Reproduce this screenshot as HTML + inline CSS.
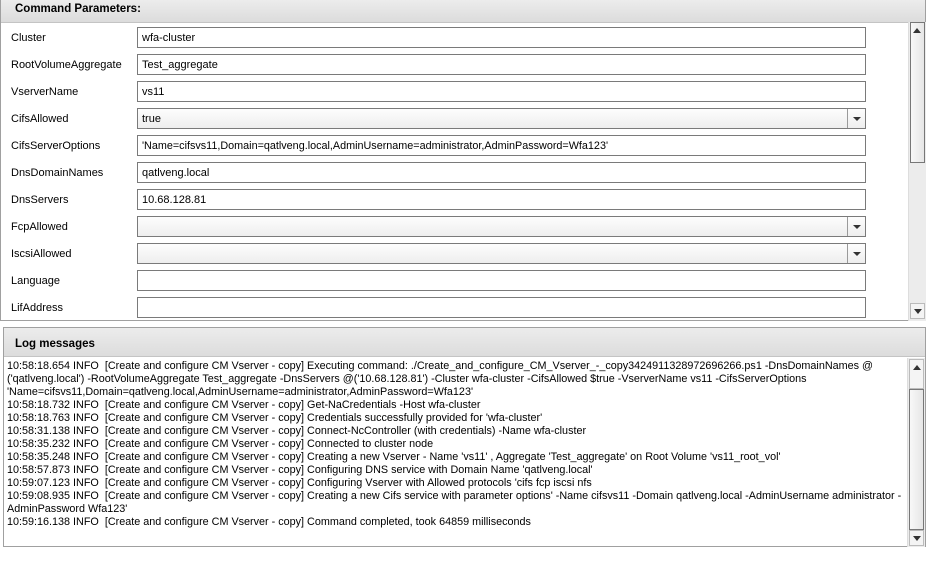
<!DOCTYPE html>
<html><head><meta charset="utf-8"><style>
*{margin:0;padding:0;box-sizing:border-box}
body{width:926px;height:577px;background:#fff;font-family:"Liberation Sans","DejaVu Sans",sans-serif;font-size:11px;color:#000;position:relative;overflow:hidden}
.panel{position:absolute;border:1px solid #a0a0a0;background:#fff}
.hdr{position:absolute;left:0;right:0;top:0;background:linear-gradient(#ececec,#dcdcdc);border-bottom:1px solid #c4c4c4;font-weight:bold;font-size:11.5px;padding-left:14px}
.lbl{position:absolute;left:10px;font-size:11px;white-space:nowrap}
.tb{position:absolute;left:136px;width:729px;height:21px;border:1px solid #7a7a7a;background:#fff;padding:4px 0 0 4px;white-space:nowrap}
.dd{background:linear-gradient(#fdfdfd,#eeeeee)}
.dd .arr{position:absolute;right:0;top:0;width:18px;height:19px;border-left:1px solid #9a9a9a}
.dd .arr:after{content:"";position:absolute;left:5px;top:8px;border-left:4px solid transparent;border-right:4px solid transparent;border-top:4px solid #333}
.sb{position:absolute;background:#ececec;border-left:1px solid #ddd}
.btn{position:absolute;left:1px;width:15px;height:16px;background:#f4f4f4;border:1px solid #bbb}
.up:after{content:"";position:absolute;left:3px;top:5px;border-left:4px solid transparent;border-right:4px solid transparent;border-bottom:5px solid #333}
.dn:after{content:"";position:absolute;left:3px;top:5px;border-left:4px solid transparent;border-right:4px solid transparent;border-top:5px solid #333}
.thumb{position:absolute;left:1px;width:15px;background:linear-gradient(90deg,#f8f8f8,#e6e6e6);border:1px solid #777}
.log{position:absolute;left:7px;white-space:nowrap;font-size:10.8px;line-height:13px}
</style></head><body>
<div class="panel" style="left:0;top:-1px;width:926px;height:322px">
 <div class="hdr" style="height:23px;padding-top:3px">Command Parameters:</div>
 <div class="lbl" style="top:32px">Cluster</div>
 <div class="tb" style="top:27px">wfa-cluster</div>
 <div class="lbl" style="top:59px">RootVolumeAggregate</div>
 <div class="tb" style="top:54px">Test_aggregate</div>
 <div class="lbl" style="top:86px">VserverName</div>
 <div class="tb" style="top:81px">vs11</div>
 <div class="lbl" style="top:113px">CifsAllowed</div>
 <div class="tb dd" style="top:108px">true<div class="arr"></div></div>
 <div class="lbl" style="top:140px">CifsServerOptions</div>
 <div class="tb" style="top:135px;font-size:10.8px">'Name=cifsvs11,Domain=qatlveng.local,AdminUsername=administrator,AdminPassword=Wfa123'</div>
 <div class="lbl" style="top:167px">DnsDomainNames</div>
 <div class="tb" style="top:162px">qatlveng.local</div>
 <div class="lbl" style="top:194px">DnsServers</div>
 <div class="tb" style="top:189px">10.68.128.81</div>
 <div class="lbl" style="top:221px">FcpAllowed</div>
 <div class="tb dd" style="top:216px"><div class="arr"></div></div>
 <div class="lbl" style="top:248px">IscsiAllowed</div>
 <div class="tb dd" style="top:243px"><div class="arr"></div></div>
 <div class="lbl" style="top:275px">Language</div>
 <div class="tb" style="top:270px"></div>
 <div class="lbl" style="top:302px">LifAddress</div>
 <div class="tb" style="top:297px"></div>
 <div class="sb" style="left:907px;top:22px;width:18px;height:299px">
  <div class="thumb" style="top:0;height:141px"></div>
  <div class="btn up" style="top:1px;border:none;background:transparent"></div>
  <div class="btn dn" style="top:281px"></div>
 </div>
</div>
<div class="panel" style="left:3px;top:327px;width:923px;height:220px">
 <div class="hdr" style="height:29px;padding-top:10px;padding-left:11px;left:0">Log messages</div>
 <div class="sb" style="left:903px;top:30px;width:18px;height:189px">
  <div class="btn up" style="top:1px;height:30px"></div>
  <div class="thumb" style="top:31px;height:141px"></div>
  <div class="btn dn" style="top:172px"></div>
 </div>
</div>
<div class="log" style="top:360px">10:58:18.654 INFO&nbsp; [Create and configure CM Vserver - copy] Executing command: ./Create_and_configure_CM_Vserver_-_copy3424911328972696266.ps1 -DnsDomainNames @</div>
<div class="log" style="top:373px">('qatlveng.local') -RootVolumeAggregate Test_aggregate -DnsServers @('10.68.128.81') -Cluster wfa-cluster -CifsAllowed $true -VserverName vs11 -CifsServerOptions</div>
<div class="log" style="top:386px">'Name=cifsvs11,Domain=qatlveng.local,AdminUsername=administrator,AdminPassword=Wfa123'</div>
<div class="log" style="top:399px">10:58:18.732 INFO&nbsp; [Create and configure CM Vserver - copy] Get-NaCredentials -Host wfa-cluster</div>
<div class="log" style="top:412px">10:58:18.763 INFO&nbsp; [Create and configure CM Vserver - copy] Credentials successfully provided for 'wfa-cluster'</div>
<div class="log" style="top:425px">10:58:31.138 INFO&nbsp; [Create and configure CM Vserver - copy] Connect-NcController (with credentials) -Name wfa-cluster</div>
<div class="log" style="top:438px">10:58:35.232 INFO&nbsp; [Create and configure CM Vserver - copy] Connected to cluster node</div>
<div class="log" style="top:451px">10:58:35.248 INFO&nbsp; [Create and configure CM Vserver - copy] Creating a new Vserver - Name 'vs11' , Aggregate 'Test_aggregate' on Root Volume 'vs11_root_vol'</div>
<div class="log" style="top:464px">10:58:57.873 INFO&nbsp; [Create and configure CM Vserver - copy] Configuring DNS service with Domain Name 'qatlveng.local'</div>
<div class="log" style="top:477px">10:59:07.123 INFO&nbsp; [Create and configure CM Vserver - copy] Configuring Vserver with Allowed protocols 'cifs fcp iscsi nfs</div>
<div class="log" style="top:490px">10:59:08.935 INFO&nbsp; [Create and configure CM Vserver - copy] Creating a new Cifs service with parameter options' -Name cifsvs11 -Domain qatlveng.local -AdminUsername administrator -</div>
<div class="log" style="top:503px">AdminPassword Wfa123'</div>
<div class="log" style="top:516px">10:59:16.138 INFO&nbsp; [Create and configure CM Vserver - copy] Command completed, took 64859 milliseconds</div>
</body></html>
